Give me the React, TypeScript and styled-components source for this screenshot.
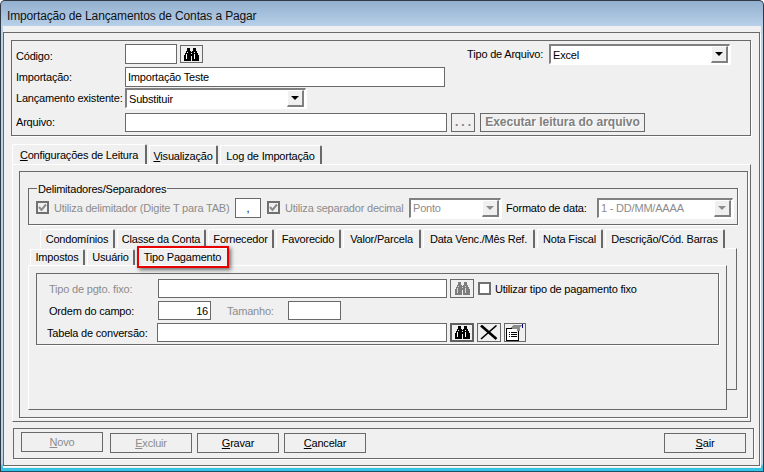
import React from "react"
import styled, { createGlobalStyle } from "styled-components"

const line = "#696969"
const panel = "#f0f0f0"
const muted = "#8c8c8c"

const GlobalStyle = createGlobalStyle`
    html, body {
        margin: 0;
        padding: 0;
        background: #fff;
    }
    * {
        box-sizing: border-box;
    }
`

const Window = styled.div`
    width: 764px;
    height: 472px;
    display: flex;
    flex-direction: column;
    padding: 0 2px 3px 2px;
    border: 1px solid #2f3a45;
    border-bottom-color: #1d4f66;
    border-radius: 5px 5px 0 0;
    background: linear-gradient(#93b0cf 0, #b9d1ea 26px, #b9d1ea 462px, #35c3e6 466px);
    font-family: "Liberation Sans", Arial, sans-serif;
    font-size: 11px;
    letter-spacing: -0.2px;
    color: #000;
    overflow: hidden;
`

const TitleBar = styled.div`
    height: 25px;
    flex: none;
    display: flex;
    align-items: center;
    padding: 5px 0 0 4px;
    font-size: 12px;
    letter-spacing: -0.14px;
    color: #111;
`

const Client = styled.div`
    flex: 1;
    display: flex;
    padding: 6px 1px 2px 0;
    background: ${panel};
`

const Frame = styled.div`
    flex: 1;
    display: flex;
    flex-direction: column;
    padding: 7px 0 0 7px;
    border: 1px solid ${line};
    box-shadow: 1px 1px 0 #fff;
`

const FormPanel = styled.div`
    width: 740px;
    height: 96px;
    flex: none;
    padding: 3px 0 0 4px;
    border: 1px solid ${line};
    box-shadow: 1px 1px 0 #fff;
`

const FormRow = styled.div<{ $gap?: number }>`
    height: 20px;
    display: flex;
    align-items: center;
    margin-top: ${p => p.$gap ?? 0}px;
`

const Text = styled.span<{ $w?: number; $muted?: boolean; $right?: boolean; $ml?: number; $drop?: number; $lift?: number }>`
    flex: none;
    width: ${p => (p.$w ? `${p.$w}px` : "auto")};
    margin-left: ${p => p.$ml ?? 0}px;
    padding-top: ${p => p.$drop ?? 0}px;
    padding-bottom: ${p => p.$lift ?? 0}px;
    text-align: ${p => (p.$right ? "right" : "left")};
    white-space: nowrap;
    color: ${p => (p.$muted ? muted : "#000")};
`

const Field = styled.div<{ $w: number; $h?: number; $right?: boolean; $center?: boolean; $ml?: number }>`
    flex: none;
    width: ${p => p.$w}px;
    height: ${p => p.$h ?? 20}px;
    margin-left: ${p => p.$ml ?? 0}px;
    display: flex;
    align-items: center;
    justify-content: ${p => (p.$right ? "flex-end" : p.$center ? "center" : "flex-start")};
    padding: 0 2px;
    background: #fff;
    border: 1px solid ${line};
    white-space: nowrap;
`

const SelectBox = styled.div<{ $w: number; $off?: boolean; $ml?: number }>`
    flex: none;
    width: ${p => p.$w}px;
    height: 20px;
    margin-left: ${p => p.$ml ?? 0}px;
    display: flex;
    align-items: center;
    justify-content: space-between;
    padding-left: 2px;
    background: #fff;
    border-style: solid;
    border-width: 2px 1px 1px 2px;
    border-color: #808080 #fff #fff #808080;
    box-shadow: 1px 1px 0 #fff;
    color: ${p => (p.$off ? muted : "#000")};
`

const SelectArrow = styled.div<{ $off?: boolean }>`
    width: 17px;
    height: 17px;
    margin-right: 1px;
    display: flex;
    align-items: center;
    justify-content: center;
    background: ${panel};
    border-style: solid;
    border-width: 1px 2px 2px 1px;
    border-color: #fff #808080 #808080 #fff;

    &::after {
        content: "";
        border-style: solid;
        border-width: 4px 4px 0 4px;
        border-color: ${p => (p.$off ? muted : "#000")} transparent transparent transparent;
    }
`

const IconButton = styled.div<{ $w?: number; $h?: number; $strong?: boolean; $ml?: number }>`
    flex: none;
    width: ${p => p.$w ?? 24}px;
    height: ${p => p.$h ?? 19}px;
    margin-left: ${p => p.$ml ?? 3}px;
    display: flex;
    align-items: center;
    justify-content: center;
    background: ${panel};
    border: ${p => (p.$strong ? 2 : 1)}px solid ${p => (p.$strong ? "#606060" : line)};
`

const DotsButton = styled.div`
    flex: none;
    width: 24px;
    height: 19px;
    margin-left: 4px;
    display: flex;
    align-items: center;
    justify-content: center;
    padding: 0 0 1px 3px;
    border: 1px solid ${line};
    font-size: 12px;
    font-weight: bold;
    letter-spacing: 3px;
    color: #808080;
`

const ReadButton = styled.div`
    flex: none;
    width: 165px;
    height: 19px;
    margin-left: 5px;
    display: flex;
    align-items: center;
    justify-content: center;
    border: 1px solid ${line};
    font-weight: bold;
    font-size: 12px;
    letter-spacing: 0;
    color: #7f7f7f;
    text-shadow: 1px 1px 0 #fff;
    white-space: nowrap;
`

const TabStrip = styled.div<{ $h: number; $inset: number; $top?: number }>`
    height: ${p => p.$h}px;
    flex: none;
    display: flex;
    align-items: flex-end;
    gap: 2px;
    margin-top: ${p => p.$top ?? 0}px;
    padding-left: ${p => p.$inset}px;
`

const Tab = styled.div<{ $w: number; $active?: boolean; $high?: boolean }>`
    position: relative;
    flex: none;
    width: ${p => p.$w}px;
    height: ${p => (p.$active ? "100%" : "calc(100% - 1px)")};
    display: flex;
    align-items: center;
    justify-content: center;
    padding: ${p => (p.$high ? "0 0 1px" : "1px 0 0")};
    border-top: 1px solid #fff;
    border-left: 1px solid #fff;
    border-right: 2px solid ${line};
    border-top-right-radius: 2px;
    white-space: nowrap;
`

const Annotation = styled.div`
    position: absolute;
    left: -1px;
    right: -2px;
    top: -3px;
    bottom: -3px;
    border: 2px solid #e60000;
    box-shadow: 2px 2px 4px rgba(0, 0, 0, 0.55);
`

const OuterPage = styled.div`
    width: 739px;
    height: 258px;
    flex: none;
    margin-left: 1px;
    padding: 6px 0 0 6px;
    border-top: 1px solid #fff;
    border-left: 1px solid #fff;
    border-right: 1px solid ${line};
    border-bottom: 1px solid ${line};
`

const InnerBox = styled.div`
    width: 729px;
    height: 247px;
    display: flex;
    flex-direction: column;
    padding: 16px 0 0 8px;
    border: 1px solid ${line};
    box-shadow: 1px 1px 0 #fff;
`

const GroupBox = styled.div`
    position: relative;
    width: 710px;
    height: 37px;
    flex: none;
    display: flex;
    align-items: center;
    padding: 2px 0 0 7px;
    border: 1px solid ${line};
    box-shadow: 1px 1px 0 #fff;
`

const Legend = styled.span`
    position: absolute;
    left: 8px;
    top: -6px;
    padding: 0 1px;
    background: ${panel};
    white-space: nowrap;
`

const CheckBox = styled.div<{ $ml?: number; $light?: boolean }>`
    flex: none;
    width: 13px;
    height: 13px;
    margin-left: ${p => p.$ml ?? 0}px;
    display: flex;
    background: ${p => (p.$light ? "#fff" : panel)};
    border: 2px solid #707070;
`

const TabBody = styled.div`
    flex: none;
    display: flex;
`

const TabColumn = styled.div`
    width: 699px;
    display: flex;
    flex-direction: column;
`

const BackEdge = styled.div`
    width: 10px;
    height: 142px;
    border-top: 1px solid #fff;
    border-right: 1px solid ${line};
    border-bottom: 1px solid ${line};
`

const InnerPage = styled.div`
    height: 145px;
    padding: 7px 0 0 7px;
    border-top: 1px solid #fff;
    border-left: 1px solid #fff;
    border-right: 1px solid ${line};
    border-bottom: 1px solid ${line};
`

const FixedFrame = styled.div`
    width: 683px;
    height: 72px;
    padding-top: 5px;
    border: 1px solid ${line};
    box-shadow: 1px 1px 0 #fff;
`

const FixedRow = styled.div<{ $gap?: number; $inset: number }>`
    height: 19px;
    display: flex;
    align-items: center;
    margin-top: ${p => p.$gap ?? 0}px;
    padding-left: ${p => p.$inset}px;
`

const BottomBar = styled.div`
    width: 741px;
    height: 31px;
    flex: none;
    display: flex;
    align-items: flex-start;
    margin: 6px 0 0 2px;
    padding: 3px 7px 0 7px;
    border: 1px solid ${line};
    box-shadow: 1px 1px 0 #fff;
`

const ActionButton = styled.div<{ $off?: boolean; $raised?: boolean; $ml?: number; $end?: boolean }>`
    flex: none;
    width: 82px;
    height: 20px;
    display: flex;
    align-items: center;
    justify-content: center;
    margin-top: ${p => (p.$raised ? 0 : 1)}px;
    margin-left: ${p => (p.$end ? "auto" : `${p.$ml ?? 0}px`)};
    border: 1px solid ${line};
    color: ${p => (p.$off ? muted : "#000")};
`

const Binoculars: React.FC<{ off?: boolean }> = ({ off }) => {
    const ink = off ? "#7d7d7d" : "#000"
    return (
        <svg width="15" height="13" viewBox="0 0 15 13" shapeRendering="crispEdges">
            <path
                fill={ink}
                d="M3 0h3v3H3zM9 0h3v3H9zM2 3h5v2H2zM8 3h5v2H8zM6 4h3v4H6zM1 5h6v2H1zM8 5h6v2H8zM0 7h7v6H0zM8 7h7v6H8z"
            />
            <path fill={off ? "#d8d8d8" : "#fff"} d="M3 4h1v1H3zM2 6h1v5H2zM10 4h1v1h-1zM10 6h1v5h-1zM7 5h1v1H7z" />
        </svg>
    )
}

const CrossIcon = () => (
    <svg width="18" height="15" viewBox="0 0 18 15">
        <path d="M1 0.5 L16.5 14" stroke="#000" strokeWidth="2.6" fill="none" />
        <path d="M16.5 0.5 L1 14" stroke="#000" strokeWidth="1.6" fill="none" />
    </svg>
)

const FormIcon = () => (
    <svg width="18" height="17" viewBox="0 0 18 17" shapeRendering="crispEdges">
        <path fill="#8c8c8c" d="M7 1h9v1H7zM6 2h9v1H6zM5 3h9v2H5zM7 5h7v2H7z" />
        <path fill="#000080" d="M16 0h1v4h-1z" />
        <path fill="#fff" d="M1 5h10v11H1z" />
        <path
            fill="#000"
            d="M0 4h6v1H1v11h11V7h1v10H0zM3 8h1v1H3zM5 8h6v1H5zM3 10h1v1H3zM5 10h6v1H5zM3 12h1v1H3zM5 12h6v1H5z"
        />
    </svg>
)

const CheckMark = () => (
    <svg width="9" height="9" viewBox="0 0 9 9">
        <path d="M1 4 L3.5 7 L8 1.5" stroke="#8c8c8c" strokeWidth="2" fill="none" />
    </svg>
)

const App: React.FC = () => {
    return (
        <Window>
            <GlobalStyle />
            <TitleBar>Importação de Lançamentos de Contas a Pagar</TitleBar>
            <Client>
                <Frame>
                    <FormPanel>
                        <FormRow>
                            <Text $w={109} $drop={3}>Código:</Text>
                            <Field $w={52} />
                            <IconButton $w={23} $h={18}>
                                <Binoculars />
                            </IconButton>
                            <Text $w={340} $right>Tipo de Arquivo:</Text>
                            <SelectBox $w={181} $ml={6}>
                                Excel
                                <SelectArrow />
                            </SelectBox>
                        </FormRow>
                        <FormRow $gap={3}>
                            <Text $w={109} $lift={1}>Importação:</Text>
                            <Field $w={320}>Importação Teste</Field>
                        </FormRow>
                        <FormRow $gap={1}>
                            <Text $w={109}>Lançamento existente:</Text>
                            <SelectBox $w={181}>
                                Substituir
                                <SelectArrow />
                            </SelectBox>
                        </FormRow>
                        <FormRow $gap={4}>
                            <Text $w={109} $lift={1}>Arquivo:</Text>
                            <Field $w={322} $h={19} />
                            <DotsButton>...</DotsButton>
                            <ReadButton>Executar leitura do arquivo</ReadButton>
                        </FormRow>
                    </FormPanel>

                    <TabStrip $h={20} $inset={1} $top={8}>
                        <Tab $w={135} $active>
                            <span><u>C</u>onfigurações de Leitura</span>
                        </Tab>
                        <Tab $w={69}>
                            <span><u>V</u>isualização</span>
                        </Tab>
                        <Tab $w={102}>Log de Importação</Tab>
                    </TabStrip>
                    <OuterPage>
                        <InnerBox>
                            <GroupBox>
                                <Legend>Delimitadores/Separadores</Legend>
                                <CheckBox>
                                    <CheckMark />
                                </CheckBox>
                                <Text $w={181} $ml={5} $muted>Utiliza delimitador (Digite T para TAB)</Text>
                                <Field $w={26} $center>,</Field>
                                <CheckBox $ml={6}>
                                    <CheckMark />
                                </CheckBox>
                                <Text $w={124} $ml={5} $muted>Utiliza separador decimal</Text>
                                <SelectBox $w={92} $off>
                                    Ponto
                                    <SelectArrow $off />
                                </SelectBox>
                                <Text $w={91} $ml={5}>Formato de data:</Text>
                                <SelectBox $w={136} $off>
                                    1 - DD/MM/AAAA
                                    <SelectArrow $off />
                                </SelectBox>
                            </GroupBox>

                            <TabStrip $h={20} $inset={12} $top={3}>
                                <Tab $w={75} $high>Condomínios</Tab>
                                <Tab $w={89} $high>Classe da Conta</Tab>
                                <Tab $w={66} $high>Fornecedor</Tab>
                                <Tab $w={65} $high>Favorecido</Tab>
                                <Tab $w={78} $high>Valor/Parcela</Tab>
                                <Tab $w={112} $high>Data Venc./Mês Ref.</Tab>
                                <Tab $w={66} $high>Nota Fiscal</Tab>
                                <Tab $w={120} $high>Descrição/Cód. Barras</Tab>
                            </TabStrip>
                            <TabBody>
                                <TabColumn>
                                    <TabStrip $h={17} $inset={2}>
                                        <Tab $w={55} $high>Impostos</Tab>
                                        <Tab $w={48} $high>Usuário</Tab>
                                        <Tab $w={92} $active $high>
                                            Tipo Pagamento
                                            <Annotation />
                                        </Tab>
                                    </TabStrip>
                                    <InnerPage>
                                        <FixedFrame>
                                            <FixedRow $inset={12}>
                                                <Text $w={109} $muted>Tipo de pgto. fixo:</Text>
                                                <Field $w={289} $h={19} />
                                                <IconButton>
                                                    <Binoculars off />
                                                </IconButton>
                                                <CheckBox $ml={4} $light />
                                                <Text $ml={4}>Utilizar tipo de pagamento fixo</Text>
                                            </FixedRow>
                                            <FixedRow $inset={12} $gap={3}>
                                                <Text $w={109}>Ordem do campo:</Text>
                                                <Field $w={53} $h={19} $right>16</Field>
                                                <Text $w={61} $ml={16} $muted>Tamanho:</Text>
                                                <Field $w={53} $h={19} />
                                            </FixedRow>
                                            <FixedRow $inset={10} $gap={3}>
                                                <Text $w={110}>Tabela de conversão:</Text>
                                                <Field $w={290} $h={19} />
                                                <IconButton $strong>
                                                    <Binoculars />
                                                </IconButton>
                                                <IconButton $ml={3}>
                                                    <CrossIcon />
                                                </IconButton>
                                                <IconButton $w={22} $ml={3}>
                                                    <FormIcon />
                                                </IconButton>
                                            </FixedRow>
                                        </FixedFrame>
                                    </InnerPage>
                                </TabColumn>
                                <BackEdge />
                            </TabBody>
                        </InnerBox>
                    </OuterPage>

                    <BottomBar>
                        <ActionButton $off $raised><span><u>N</u>ovo</span></ActionButton>
                        <ActionButton $off $ml={7}><span><u>E</u>xcluir</span></ActionButton>
                        <ActionButton $ml={5}><span><u>G</u>ravar</span></ActionButton>
                        <ActionButton $ml={5}><span><u>C</u>ancelar</span></ActionButton>
                        <ActionButton $end><span><u>S</u>air</span></ActionButton>
                    </BottomBar>
                </Frame>
            </Client>
        </Window>
    )
}

export default App
